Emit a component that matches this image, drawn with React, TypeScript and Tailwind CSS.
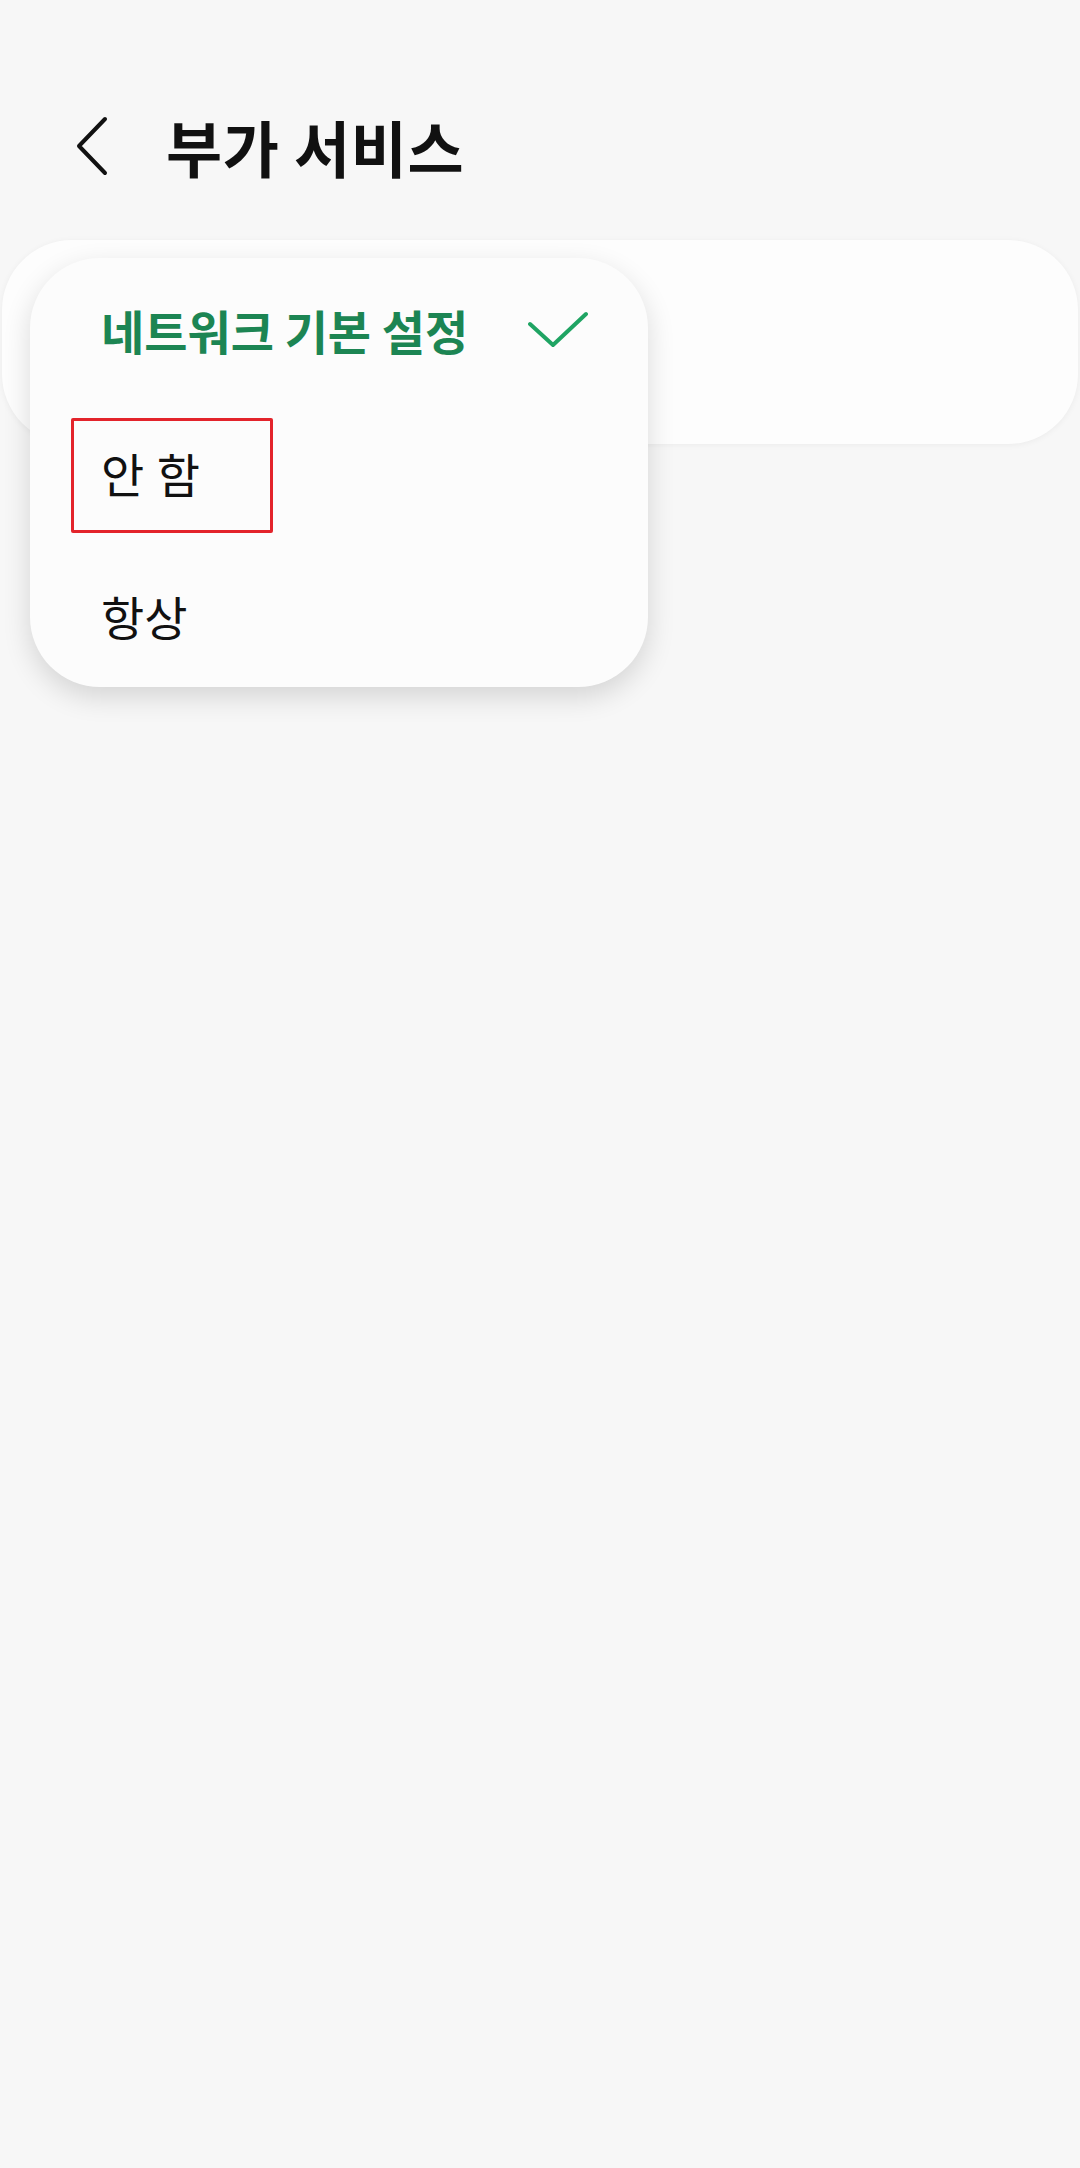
export default function App() {
  return (
    <div className="min-h-screen bg-[#f7f7f7] font-['Noto_Sans_CJK_KR',sans-serif] text-[#111]">
      <header className="h-[240px] pt-[52px] flex items-center">
        <svg
          className="ml-[76px] shrink-0"
          width="32"
          height="60"
          viewBox="0 0 32 60"
          fill="none"
          stroke="#111"
          strokeWidth="4"
          strokeLinecap="round"
          strokeLinejoin="round"
        >
          <path d="M29 3 L3 30 L29 57" />
        </svg>
        <h1 className="ml-[58px] text-[61px] font-bold leading-none tracking-[0.01em]">부가 서비스</h1>
      </header>

      <div className="relative mx-[2px] h-[204px] rounded-[70px] bg-[#fdfdfd] shadow-[0_1px_6px_rgba(0,0,0,0.05)]">
        <div className="absolute left-[28px] top-[18px] w-[618px] rounded-[70px] bg-[#fcfcfc] shadow-[0_10px_28px_rgba(0,0,0,0.14)]">
          <div className="h-[143px] flex items-center justify-between pl-[71px] pr-[60px]">
            <span className="text-[47px] font-bold leading-none text-[#1c8553]">
              네트워크 기본 설정
            </span>
            <svg
              width="60"
              height="37"
              viewBox="0 0 60 37"
              fill="none"
              stroke="#1fa463"
              strokeWidth="4"
              strokeLinecap="round"
              strokeLinejoin="round"
            >
              <path d="M2 13 L25 34 L58 3" />
            </svg>
          </div>
          <div className="relative h-[143px] flex items-center pl-[71px]">
            <span className="text-[47px] leading-none tracking-[0.02em]">안 함</span>
            <div className="absolute left-[41px] top-[17px] w-[202px] h-[115px] border-[3px] border-[#e3242b] rounded-[2px]" />
          </div>
          <div className="h-[143px] flex items-center pl-[71px]">
            <span className="text-[47px] leading-none">항상</span>
          </div>
        </div>
      </div>
    </div>
  );
}
